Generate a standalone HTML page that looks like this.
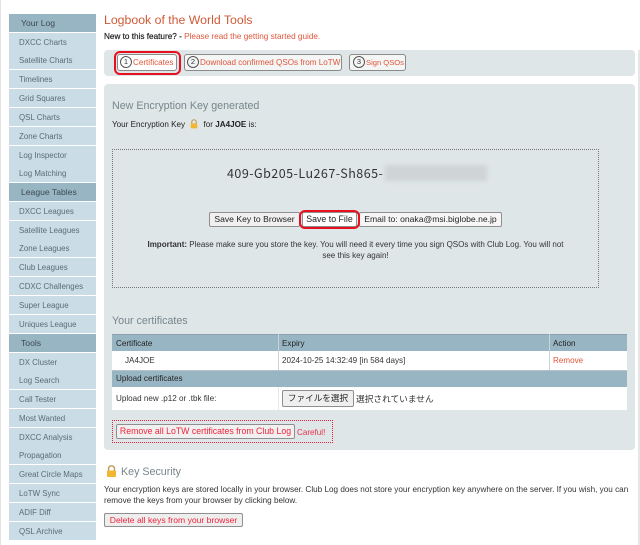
<!DOCTYPE html>
<html>
<head>
<meta charset="utf-8">
<style>
html,body{margin:0;padding:0;background:#fff;width:640px;height:545px;overflow:hidden}
body{position:relative;font-family:"Liberation Sans","Noto Sans CJK JP",sans-serif;font-size:8.1px;color:#333}
.a{position:absolute;white-space:nowrap}
.s{position:absolute;left:9px;width:87px;height:18px;line-height:19px;background:#cadde6;color:#5c6b75;font-size:7.9px;padding-left:10px;box-sizing:border-box;white-space:nowrap}
.s.h{background:#98b5c3;color:#3c4a52;font-size:8.6px;line-height:18px;padding-left:12px}
.panel{position:absolute;background:#dfe6e8;border-radius:4px}
.tab{position:absolute;top:54px;height:17px;line-height:16px;border:1px solid #8a8a8a;border-radius:3px;background:#f4f5f5;box-sizing:border-box;color:#e0563a;font-size:8.1px;white-space:nowrap;padding-left:2px}
.tab i{font-style:normal;display:inline-block;width:10px;height:10px;border:1px solid #555;border-radius:50%;color:#333;font-size:7.5px;line-height:10px;text-align:center;margin-right:1px;vertical-align:middle;position:relative;top:-1px}
.btn{position:absolute;background:#f0f0f0;border:1px solid #8f8f8f;border-radius:2px;box-sizing:border-box;font-size:8.6px;color:#222;text-align:center;white-space:nowrap}
.red{position:absolute;border:2.5px solid #e8101e;border-radius:6px;box-sizing:border-box}
h2{position:absolute;margin:0;font-weight:normal;color:#76868c;font-size:10.7px;white-space:nowrap}
.cell{position:absolute;white-space:nowrap}
</style>
</head>
<body>
<div class="a" style="left:0;top:0;width:1px;height:545px;background:#e4e4e4"></div>
<div class="a" style="left:638px;top:50px;width:2px;height:495px;background:#e6e6e6"></div>

<div class="s h" style="top:13.5px">Your Log</div>
<div class="s" style="top:33px">DXCC Charts</div>
<div class="s" style="top:51px">Satellite Charts</div>
<div class="s" style="top:70px">Timelines</div>
<div class="s" style="top:89px">Grid Squares</div>
<div class="s" style="top:108px">QSL Charts</div>
<div class="s" style="top:127px">Zone Charts</div>
<div class="s" style="top:145.5px">Log Inspector</div>
<div class="s" style="top:164px">Log Matching</div>
<div class="s h" style="top:183px">League Tables</div>
<div class="s" style="top:202px">DXCC Leagues</div>
<div class="s" style="top:221px">Satellite Leagues</div>
<div class="s" style="top:239px">Zone Leagues</div>
<div class="s" style="top:258px">Club Leagues</div>
<div class="s" style="top:277px">CDXC Challenges</div>
<div class="s" style="top:296px">Super League</div>
<div class="s" style="top:314.5px">Uniques League</div>
<div class="s h" style="top:333.5px">Tools</div>
<div class="s" style="top:352.5px">DX Cluster</div>
<div class="s" style="top:371px">Log Search</div>
<div class="s" style="top:390px">Call Tester</div>
<div class="s" style="top:409px">Most Wanted</div>
<div class="s" style="top:427.5px">DXCC Analysis</div>
<div class="s" style="top:446px">Propagation</div>
<div class="s" style="top:465px">Great Circle Maps</div>
<div class="s" style="top:484px">LoTW Sync</div>
<div class="s" style="top:503px">ADIF Diff</div>
<div class="s" style="top:522px">QSL Archive</div>

<div class="a" style="left:104px;top:13px;font-size:12.3px;color:#cf5a36">Logbook of the World Tools</div>
<div class="a" style="left:104px;top:32px;font-size:8.2px;color:#222"><b style="font-weight:normal;-webkit-text-stroke:.2px #222">New to this feature? -</b> <span style="color:#e0563a">Please read the getting started guide.</span></div>

<div class="panel" style="left:104px;top:50px;width:531px;height:26px"></div>
<div class="tab" style="left:117px;width:60px;background:#fff"><i>1</i>Certificates</div>
<div class="tab" style="left:184px;width:158px"><i>2</i>Download confirmed QSOs from LoTW</div>
<div class="tab" style="left:349px;width:57px;padding-left:3px;font-size:7.6px"><i>3</i>Sign QSOs</div>
<div class="red" style="left:114px;top:51px;width:67px;height:24px"></div>

<div class="panel" style="left:104px;top:84px;width:531px;height:366px"></div>
<h2 style="left:112px;top:100px">New Encryption Key generated</h2>
<div class="a" style="left:112px;top:119px;color:#222">Your Encryption Key
<svg width="8" height="10" viewBox="0 0 9 11" style="vertical-align:-2px;margin:0 3px"><path d="M2 5V3.2a2.5 2.5 0 0 1 5 0V5" fill="none" stroke="#b99a50" stroke-width="1.2"/><rect x=".8" y="4.8" width="7.4" height="5.6" rx="1" fill="#f2b632"/></svg>
 for <b>JA4JOE</b> is:</div>

<div class="a" style="left:112px;top:149px;width:487px;height:139px;border:1px dotted #777;box-sizing:border-box"></div>
<div class="a" style="left:227px;top:163px;font-family:'Noto Sans CJK JP','Liberation Mono',monospace;font-size:12.5px;color:#333;letter-spacing:.47px">409-Gb205-Lu267-Sh865-</div>
<div class="a" style="left:385px;top:165px;width:102px;height:16px;background:#cfd4d6;filter:blur(2px)"></div>

<div class="btn" style="left:209px;top:212px;width:91px;height:15px;line-height:13px">Save Key to Browser</div>
<div class="btn" style="left:302px;top:212px;width:55px;height:15px;line-height:13px;background:#fff;font-size:8.8px">Save to File</div>
<div class="btn" style="left:359px;top:212px;width:143px;height:15px;line-height:13px;background:#f6f6f6">Email to: onaka@msi.biglobe.ne.jp</div>
<div class="red" style="left:299px;top:210px;width:61px;height:19px"></div>

<div class="a" style="left:112px;top:239px;width:487px;text-align:center;font-size:8px;color:#333;line-height:11px"><b>Important:</b> Please make sure you store the key. You will need it every time you sign QSOs with Club Log. You will not<br>see this key again!</div>

<h2 style="left:112px;top:315px">Your certificates</h2>

<div class="a" style="left:112px;top:334px;width:515px;height:17px;background:#98b5c3;border-top:1px solid #8aa0ac;box-sizing:border-box"></div>
<div class="a" style="left:112px;top:351px;width:515px;height:19px;background:#fff"></div>
<div class="a" style="left:112px;top:370px;width:515px;height:17px;background:#98b5c3;border-top:1px solid #b5c2c9;box-sizing:border-box"></div>
<div class="a" style="left:112px;top:387px;width:515px;height:23px;background:#fff"></div>
<div class="a" style="left:278px;top:334px;width:1px;height:36px;background:#c9d3d8"></div>
<div class="a" style="left:549px;top:334px;width:1px;height:36px;background:#c9d3d8"></div>
<div class="a" style="left:278px;top:387px;width:1px;height:23px;background:#e4e8ea"></div>

<div class="cell" style="left:116px;top:339px;color:#222">Certificate</div>
<div class="cell" style="left:282px;top:339px;color:#222">Expiry</div>
<div class="cell" style="left:553px;top:339px;color:#222">Action</div>
<div class="cell" style="left:125px;top:356px;color:#333">JA4JOE</div>
<div class="cell" style="left:282px;top:356px;color:#333">2024-10-25 14:32:49 [in 584 days]</div>
<div class="cell" style="left:553px;top:356px;color:#e0563a">Remove</div>
<div class="cell" style="left:116px;top:374px;color:#222">Upload certificates</div>
<div class="cell" style="left:116px;top:394px;color:#333">Upload new .p12 or .tbk file:</div>
<div class="btn" style="left:282px;top:390px;width:72px;height:17px;line-height:15px;font-size:8.6px;background:#efefef">ファイルを選択</div>
<div class="cell" style="left:356px;top:392px;font-size:8.7px;color:#333">選択されていません</div>

<div class="a" style="left:112px;top:420px;width:221px;height:23px;border:1px dotted #e8203a;box-sizing:border-box"></div>
<div class="btn" style="left:116px;top:424px;width:179px;height:15px;line-height:13px;color:#f0243c;font-size:8.75px">Remove all LoTW certificates from Club Log</div>
<div class="a" style="left:297px;top:428px;color:#e8304a">Careful!</div>

<svg class="a" style="left:106px;top:465px" width="11" height="12" viewBox="0 0 11 12"><path d="M2.5 6V3.8a3 3 0 0 1 6 0V6" fill="none" stroke="#b99a50" stroke-width="1.4"/><rect x="1" y="5.5" width="9" height="6.5" rx="1" fill="#f2b632"/></svg>
<h2 style="left:121px;top:466px">Key Security</h2>
<div class="a" style="left:104px;top:484px;font-size:8.16px;line-height:11px;color:#333">Your encryption keys are stored locally in your browser. Club Log does not store your encryption key anywhere on the server. If you wish, you can<br>remove the keys from your browser by clicking below.</div>
<div class="btn" style="left:104px;top:513px;width:139px;height:14px;line-height:12px;color:#f0243c;background:#eee">Delete all keys from your browser</div>
</body>
</html>
